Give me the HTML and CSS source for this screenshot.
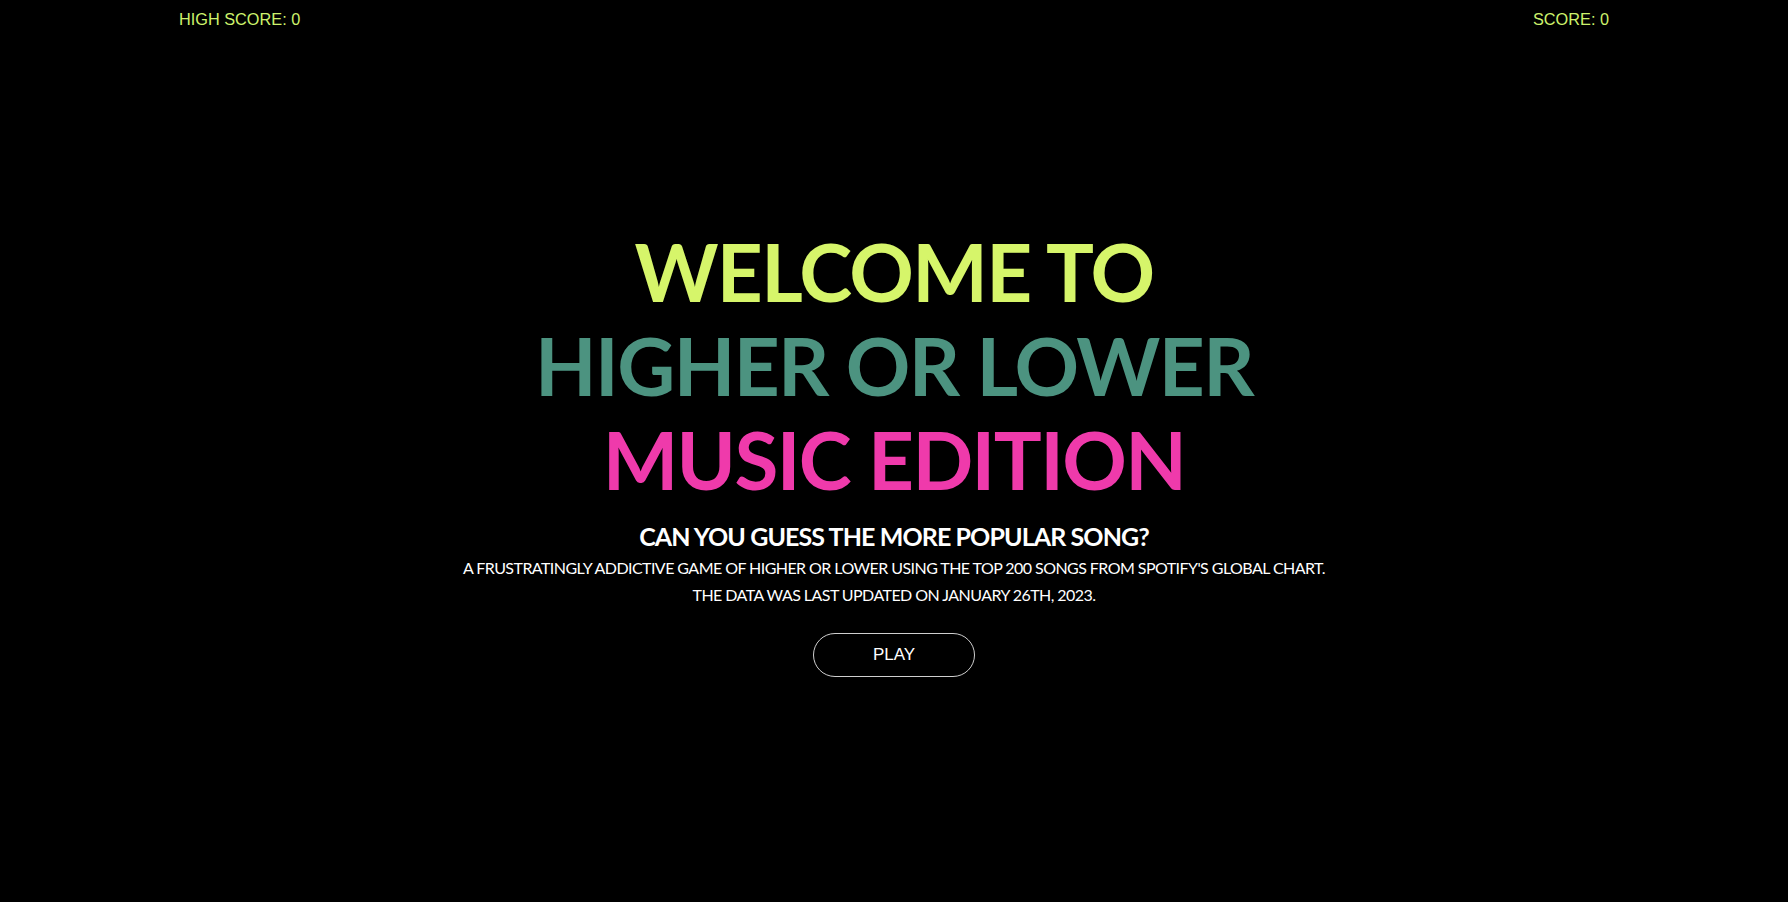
FILE: index.html
```html
<!DOCTYPE html>
<html lang="en">
<head>
<meta charset="utf-8">
<title>Higher or Lower - Music Edition</title>
<link rel="stylesheet" href="styles.css">
</head>
<body>
<div class="page">
  <header class="scorebar">
    <span class="score">HIGH SCORE: 0</span>
    <span class="score">SCORE: 0</span>
  </header>
  <main class="hero">
    <h1 class="title">
      <span class="line line-yellow">WELCOME TO</span>
      <span class="line line-teal">HIGHER OR LOWER</span>
      <span class="line line-pink">MUSIC EDITION</span>
    </h1>
    <h2 class="tagline">CAN YOU GUESS THE MORE POPULAR SONG?</h2>
    <p class="desc">A FRUSTRATINGLY ADDICTIVE GAME OF HIGHER OR LOWER USING THE TOP 200 SONGS FROM SPOTIFY'S GLOBAL CHART.</p>
    <p class="desc">THE DATA WAS LAST UPDATED ON JANUARY 26TH, 2023.</p>
    <button class="play">PLAY</button>
  </main>
</div>
</body>
</html>
```
FILE: styles.css
```css
html, body {
  margin: 0;
  padding: 0;
  background: #000;
  height: 100%;
}
.page {
  height: 902px;
  display: flex;
  flex-direction: column;
}
.scorebar {
  display: flex;
  justify-content: space-between;
  padding: 9px 179px 0;
  height: 27px;
}
.score {
  font-family: "Liberation Sans", Arial, sans-serif;
  font-size: 16.3px;
  line-height: 20px;
  color: #cdf26c;
}
.hero {
  flex: 1;
  display: flex;
  flex-direction: column;
  align-items: center;
  justify-content: center;
  padding-bottom: 38px;
  font-family: "Lato", "Inter", sans-serif;
  text-align: center;
}
.title {
  margin: 0;
  display: flex;
  flex-direction: column;
  align-items: center;
  font-size: 80px;
  font-weight: 700;
  line-height: 94px;
  letter-spacing: -1.6px;
}
.line-yellow { color: #d6f56a; }
.line-teal { color: #4c9380; }
.line-pink { color: #ef3aab; }
.tagline {
  margin: 14px 0 2px;
  font-size: 25px;
  font-weight: 700;
  color: #fff;
  line-height: 32px;
  letter-spacing: -0.9px;
}
.desc {
  margin: 0;
  font-size: 16px;
  line-height: 27px;
  color: #fff;
  letter-spacing: -0.56px;
}
.play {
  margin-top: 25px;
  width: 162px;
  height: 44px;
  border: 1px solid #cfcfcf;
  border-radius: 22px;
  background: #000;
  color: #fff;
  font-family: "Liberation Sans", Arial, sans-serif;
  font-size: 17px;
  cursor: pointer;
}
```
